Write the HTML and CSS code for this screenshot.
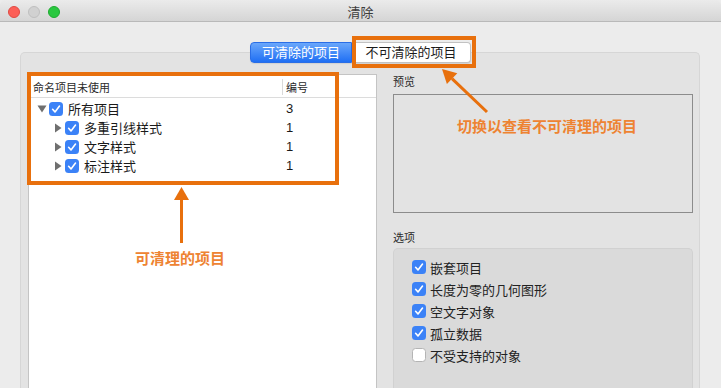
FILE: index.html
```html
<!DOCTYPE html>
<html lang="zh">
<head>
    <meta charset="UTF-8">
    <meta name="viewport" content="width=device-width, initial-scale=1.0">
    <title>清除</title>
    <link rel="stylesheet" href="styles.css">
</head>
<body>

<div class="window">
    <div class="titlebar">
        <div class="lights">
            <span class="light red"></span>
            <span class="light gray"></span>
            <span class="light green"></span>
        </div>
        <div class="title">清除</div>
        <div></div>
    </div>

    <div class="content">
        <div class="group">
            <div class="segmented">
                <div class="seg active">可清除的项目</div>
                <div class="seg">不可清除的项目</div>
            </div>

            <div class="panes">
                <!-- purgeable tree -->
                <div class="tree">
                    <div class="tree-head">
                        <div class="col-name">命名项目未使用</div>
                        <div class="col-num">编号</div>
                    </div>
                    <div class="tree-body">
                        <div class="tree-row">
                            <div class="name level-0">
                                <span class="toggle"><svg width="10" height="8" viewBox="0 0 10 8"><path d="M0.5 0.5 H9.5 L5 7.5 Z" fill="#6f6f6f"/></svg></span>
                                <span class="check on"><svg width="14" height="14" viewBox="0 0 14 14"><path d="M3.6 7.3 L6 9.9 L10.5 4.1" fill="none" stroke="#fff" stroke-width="1.6" stroke-linecap="round" stroke-linejoin="round"/></svg></span>
                                <span class="text">所有项目</span>
                            </div>
                            <div class="num">3</div>
                        </div>
                        <div class="tree-row">
                            <div class="name level-1">
                                <span class="toggle"><svg width="10" height="10" viewBox="0 0 10 10"><path d="M2 0.5 V9.5 L8.5 5 Z" fill="#6f6f6f"/></svg></span>
                                <span class="check on"><svg width="14" height="14" viewBox="0 0 14 14"><path d="M3.6 7.3 L6 9.9 L10.5 4.1" fill="none" stroke="#fff" stroke-width="1.6" stroke-linecap="round" stroke-linejoin="round"/></svg></span>
                                <span class="text">多重引线样式</span>
                            </div>
                            <div class="num">1</div>
                        </div>
                        <div class="tree-row">
                            <div class="name level-1">
                                <span class="toggle"><svg width="10" height="10" viewBox="0 0 10 10"><path d="M2 0.5 V9.5 L8.5 5 Z" fill="#6f6f6f"/></svg></span>
                                <span class="check on"><svg width="14" height="14" viewBox="0 0 14 14"><path d="M3.6 7.3 L6 9.9 L10.5 4.1" fill="none" stroke="#fff" stroke-width="1.6" stroke-linecap="round" stroke-linejoin="round"/></svg></span>
                                <span class="text">文字样式</span>
                            </div>
                            <div class="num">1</div>
                        </div>
                        <div class="tree-row">
                            <div class="name level-1">
                                <span class="toggle"><svg width="10" height="10" viewBox="0 0 10 10"><path d="M2 0.5 V9.5 L8.5 5 Z" fill="#6f6f6f"/></svg></span>
                                <span class="check on"><svg width="14" height="14" viewBox="0 0 14 14"><path d="M3.6 7.3 L6 9.9 L10.5 4.1" fill="none" stroke="#fff" stroke-width="1.6" stroke-linecap="round" stroke-linejoin="round"/></svg></span>
                                <span class="text">标注样式</span>
                            </div>
                            <div class="num">1</div>
                        </div>
                    </div>
                </div>

                <!-- preview and options -->
                <div class="side">
                    <div class="label">预览</div>
                    <div class="preview"></div>
                    <div class="label options-label">选项</div>
                    <div class="options">
                        <div class="option">
                            <span class="check on"><svg width="14" height="14" viewBox="0 0 14 14"><path d="M3.6 7.3 L6 9.9 L10.5 4.1" fill="none" stroke="#fff" stroke-width="1.6" stroke-linecap="round" stroke-linejoin="round"/></svg></span>
                            <span class="text">嵌套项目</span>
                        </div>
                        <div class="option">
                            <span class="check on"><svg width="14" height="14" viewBox="0 0 14 14"><path d="M3.6 7.3 L6 9.9 L10.5 4.1" fill="none" stroke="#fff" stroke-width="1.6" stroke-linecap="round" stroke-linejoin="round"/></svg></span>
                            <span class="text">长度为零的几何图形</span>
                        </div>
                        <div class="option">
                            <span class="check on"><svg width="14" height="14" viewBox="0 0 14 14"><path d="M3.6 7.3 L6 9.9 L10.5 4.1" fill="none" stroke="#fff" stroke-width="1.6" stroke-linecap="round" stroke-linejoin="round"/></svg></span>
                            <span class="text">空文字对象</span>
                        </div>
                        <div class="option">
                            <span class="check on"><svg width="14" height="14" viewBox="0 0 14 14"><path d="M3.6 7.3 L6 9.9 L10.5 4.1" fill="none" stroke="#fff" stroke-width="1.6" stroke-linecap="round" stroke-linejoin="round"/></svg></span>
                            <span class="text">孤立数据</span>
                        </div>
                        <div class="option">
                            <span class="check"></span>
                            <span class="text">不受支持的对象</span>
                        </div>
                    </div>
                </div>
            </div>
        </div>
    </div>

    <!-- orange annotations drawn over the dialog -->
    <div class="notes">
        <svg class="marks" width="721" height="388" viewBox="0 0 721 388">
            <rect x="29" y="74" width="308" height="109" fill="none" stroke="#e8700d" stroke-width="4"/>
            <rect x="354" y="38" width="120" height="28" fill="none" stroke="#e8700d" stroke-width="4"/>
            <line x1="181.5" y1="243" x2="181.5" y2="198" stroke="#e8700d" stroke-width="3"/>
            <path d="M181.5 187 L174 200 L189 200 Z" fill="#e8700d"/>
            <line x1="487" y1="112" x2="452" y2="78.7" stroke="#e8700d" stroke-width="3"/>
            <path d="M442 69 L457.3 73.3 L446.9 84.1 Z" fill="#e8700d"/>
        </svg>
        <div class="note note-left">可清理的项目</div>
        <div class="note note-right">切换以查看不可清理的项目</div>
    </div>
</div>

</body>
</html>
```

FILE: styles.css
```css
body {
    margin: 0;
    font-family: "Liberation Sans", "Noto Sans CJK SC", sans-serif;
    background-color: #ececec;
}

.window {
    position: relative;
    width: 721px;
    height: 388px;
    display: flex;
    flex-direction: column;
    overflow: hidden;
    background-color: #ececec;
}

.titlebar {
    box-sizing: border-box;
    height: 22px;
    padding-top: 2px;
    display: grid;
    grid-template-columns: 1fr auto 1fr;
    align-items: center;
    background: linear-gradient(#ebebeb, #d5d5d5);
    border-bottom: 1px solid #b9b9b9;
    border-radius: 5px 5px 0 0;
}

.lights {
    display: flex;
    gap: 8px;
    padding-left: 8px;
}

.light {
    box-sizing: border-box;
    width: 12px;
    height: 12px;
    border-radius: 50%;
}

.light.red {
    background-color: #fc5f57;
    border: 1px solid #df4a43;
}

.light.gray {
    background-color: #d1d1d1;
    border: 1px solid #bfbfbf;
}

.light.green {
    background-color: #2ac840;
    border: 1px solid #1eab30;
}

.title {
    font-size: 13px;
    color: #3c3c3c;
}

.content {
    flex: 1;
    display: flex;
    flex-direction: column;
    padding: 30px 21px 0 20px;
}

.group {
    flex: 1;
    display: flex;
    flex-direction: column;
    background-color: #e3e3e3;
    border: 1px solid #d6d6d6;
    border-bottom: none;
    border-radius: 5px 5px 0 0;
    padding: 0 6px 0 7px;
}

.segmented {
    display: flex;
    justify-content: center;
    margin-top: -11px;
}

.seg {
    box-sizing: border-box;
    height: 21px;
    line-height: 19px;
    font-size: 13px;
    text-align: center;
    color: #1b1b1b;
    background-color: #fff;
    border: 1px solid #c2c2c2;
    border-left: none;
    border-radius: 0 4px 4px 0;
    width: 119px;
    box-shadow: 0 1px 1px rgba(0, 0, 0, 0.08);
}

.seg.active {
    width: 102px;
    color: #fff;
    background: linear-gradient(#6aa7fb, #1f6ff4);
    border: 1px solid #2a6ee6;
    border-radius: 4px 0 0 4px;
}

.panes {
    flex: 1;
    display: grid;
    grid-template-columns: 349px 300px;
    column-gap: 16px;
    margin-top: 11px;
}

.tree {
    background-color: #fff;
    border: 1px solid #c4c4c4;
    border-bottom: none;
}

.tree-head {
    box-sizing: border-box;
    height: 23px;
    display: grid;
    grid-template-columns: 253px 1fr;
    align-items: stretch;
    padding: 4px 0;
    border-bottom: 1px solid #dcdcdc;
    font-size: 11px;
    color: #2a2a2a;
}

.col-name {
    display: flex;
    align-items: center;
    padding-left: 4px;
}

.col-num {
    display: flex;
    align-items: center;
    padding-left: 3px;
    border-left: 1px solid #dadada;
}

.tree-body {
    padding-top: 1px;
}

.tree-row {
    height: 19px;
    display: grid;
    grid-template-columns: 253px 1fr;
    align-items: center;
    font-size: 13px;
    color: #1a1a1a;
}

.name {
    display: flex;
    align-items: center;
}

.name.level-0 {
    padding-left: 8px;
}

.name.level-1 {
    padding-left: 24px;
}

.toggle {
    width: 10px;
    display: flex;
    align-items: center;
    justify-content: center;
    margin-right: 2px;
}

.check {
    box-sizing: border-box;
    width: 14px;
    height: 14px;
    border-radius: 3.5px;
    background-color: #fff;
    border: 1px solid #b4b4b4;
    flex-shrink: 0;
}

.check.on {
    background-color: #3b82f7;
    border: none;
}

.check svg {
    display: block;
}

.name .text {
    margin-left: 5px;
}

.num {
    padding-left: 4px;
}

.label {
    font-size: 11px;
    line-height: 14px;
    margin-top: 1px;
    margin-bottom: 5px;
    color: #2a2a2a;
}

.preview {
    height: 117px;
    border: 1px solid #8c8c8c;
}

.options-label {
    margin-top: 18px;
    margin-bottom: 3px;
}

.options {
    background-color: #dadada;
    border: 1px solid #d1d1d1;
    border-bottom: none;
    border-radius: 5px 5px 0 0;
    padding: 7px 0 0 18px;
    height: 200px;
}

.option {
    height: 22px;
    display: flex;
    align-items: center;
    gap: 4px;
    font-size: 13px;
    color: #222;
}

.notes {
    position: absolute;
    inset: 0;
    pointer-events: none;
}

.marks {
    position: absolute;
    left: 0;
    top: 0;
}

.note {
    position: absolute;
    font-size: 15px;
    font-weight: bold;
    line-height: 18px;
    color: #ee8332;
    font-family: "Noto Sans CJK SC", sans-serif;
}

.note-left {
    left: 135px;
    top: 249px;
}

.note-right {
    left: 457px;
    top: 117px;
}
```
